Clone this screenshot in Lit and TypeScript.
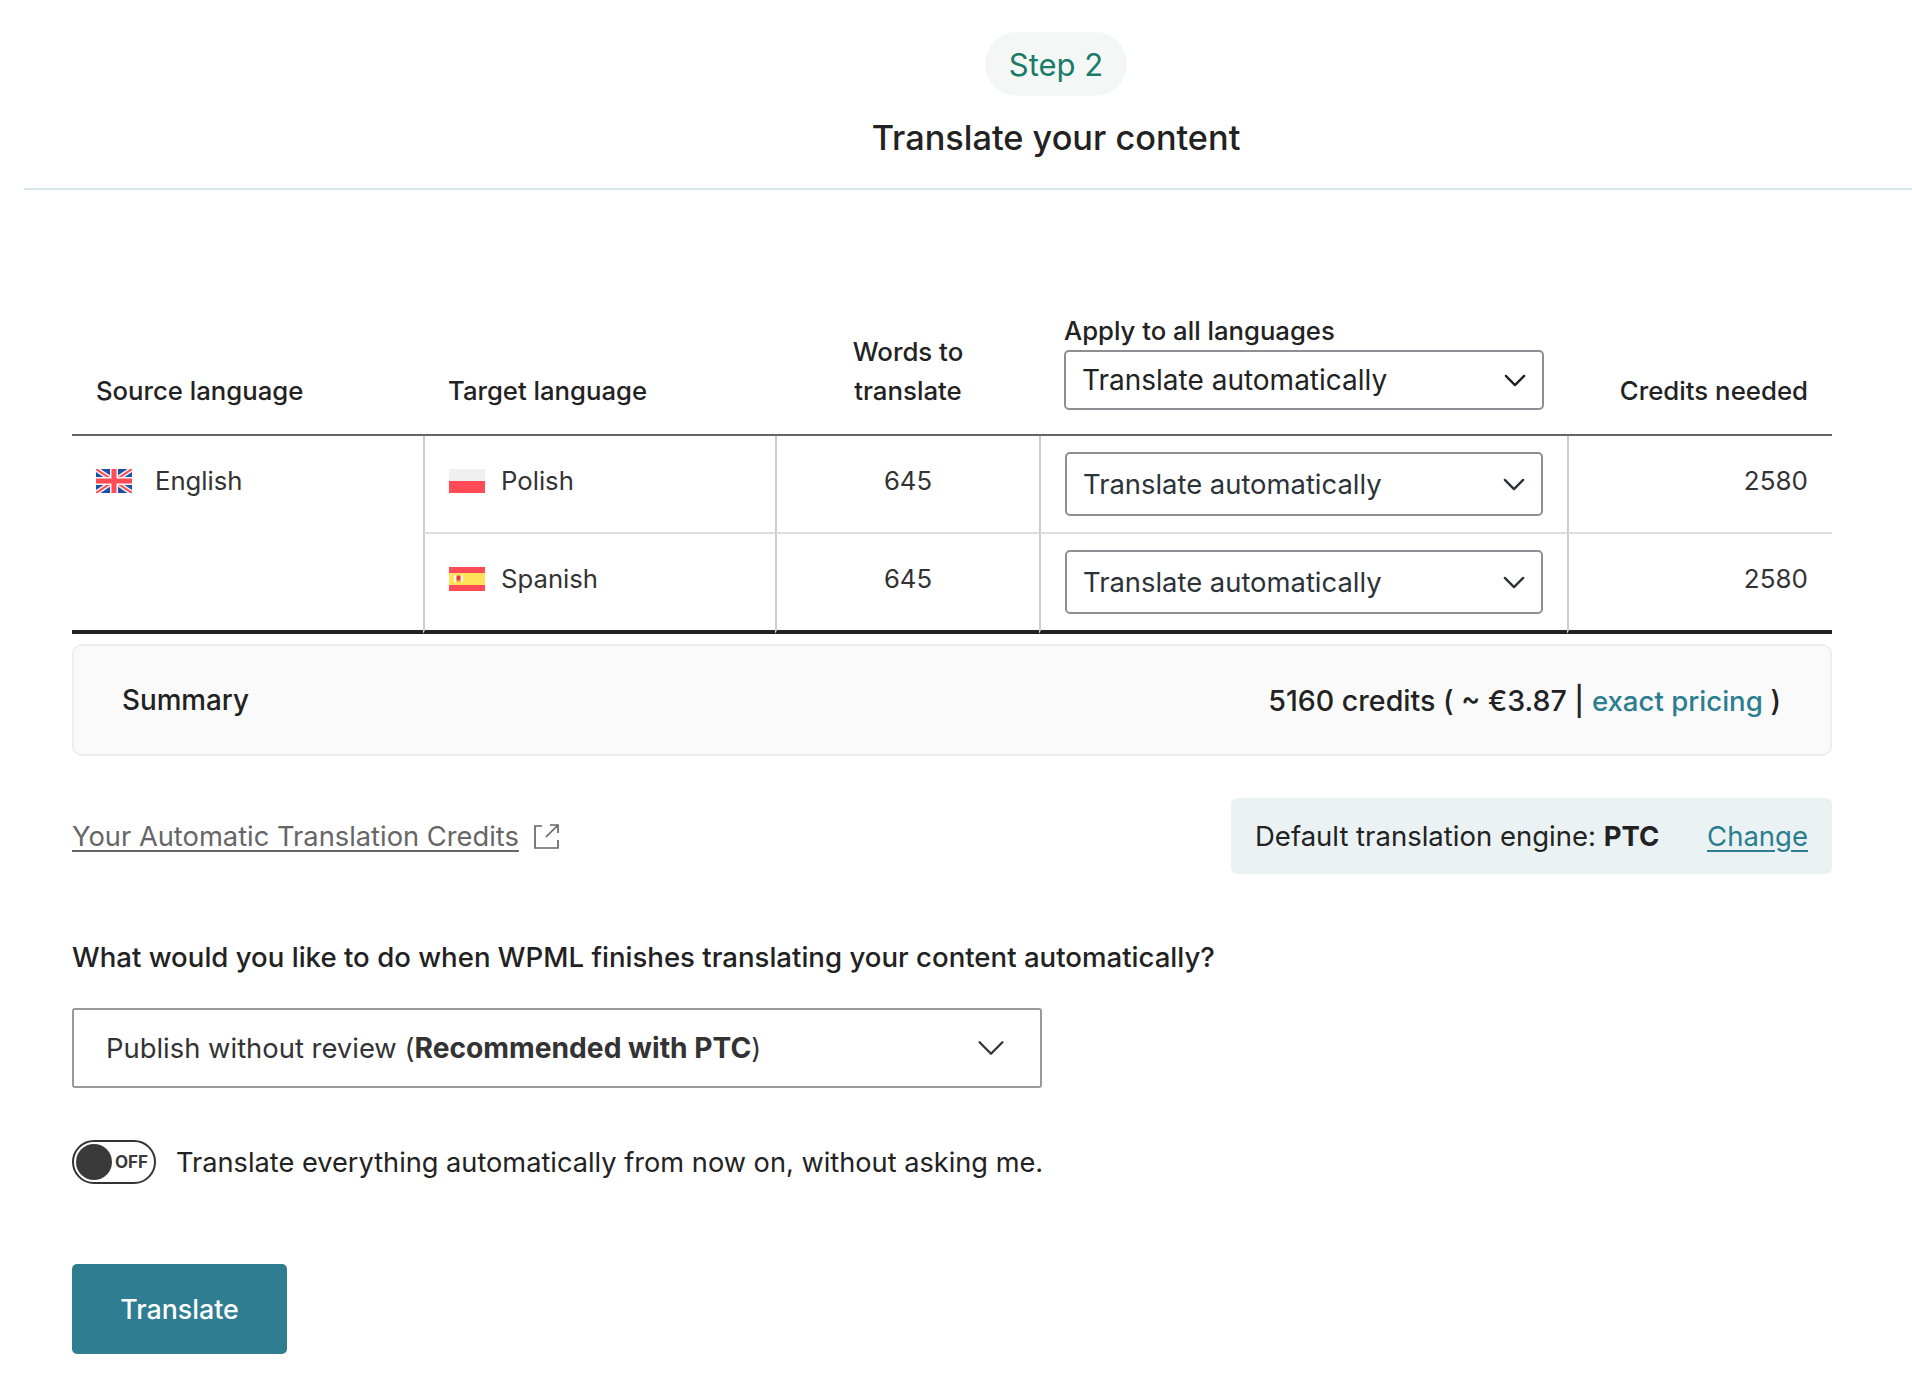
import { LitElement, html, css } from "lit";
import { customElement } from "lit/decorators.js";

const chevron = (cls: string) => html`<svg class=${cls} viewBox="0 0 24 14" fill="none" stroke="currentColor" stroke-linecap="round" stroke-linejoin="round"><path d="M2 2l10 10L22 2" /></svg>`;

const ukFlag = html`<svg class="flag" viewBox="0 0 36 24">
  <rect width="36" height="24" fill="#1e4fa8" />
  <path d="M0 0l36 24M36 0L0 24" stroke="#f5f5f5" stroke-width="5" />
  <path d="M0 0l36 24M36 0L0 24" stroke="#ff4b55" stroke-width="2" />
  <path d="M18 0v24M0 12h36" stroke="#f5f5f5" stroke-width="8" />
  <path d="M18 0v24M0 12h36" stroke="#ff4b55" stroke-width="5" />
</svg>`;

const plFlag = html`<svg class="flag" viewBox="0 0 36 24">
  <rect width="36" height="12" fill="#f0f0f0" />
  <rect y="12" width="36" height="12" fill="#ff4b55" />
</svg>`;

const esFlag = html`<svg class="flag" viewBox="0 0 36 24">
  <rect width="36" height="24" fill="#ff4b55" />
  <rect y="6" width="36" height="12" fill="#ffe15a" />
  <rect x="5" y="8" width="2" height="7" fill="#f5f5f5" />
  <rect x="12" y="8" width="2" height="7" fill="#f5f5f5" />
  <rect x="7" y="8" width="5" height="7" rx="2" fill="#f0a040" />
  <rect x="8" y="9" width="3" height="4" fill="#e63946" />
</svg>`;

@customElement("app-root")
export class AppRoot extends LitElement {
  static styles = css`
    :host {
      display: block;
      background: #fff;
      min-height: 1396px;
      font-family: Inter, "Liberation Sans", sans-serif;
      font-size: 27.5px;
      color: #222;
    }
    .head {
      display: flex;
      flex-direction: column;
      align-items: center;
      padding: 32px 0 30px 200px;
    }
    .pill {
      height: 64px;
      padding: 0 24px;
      display: flex;
      align-items: center;
      border-radius: 32px;
      background: #f4f7f6;
      color: #1a7c68;
      font-size: 31px;
    }
    h1 {
      margin: 22px 0 0;
      font-size: 34.3px;
      line-height: 40px;
      font-weight: 500;
      color: #222;
    }
    .rule {
      height: 2px;
      margin-left: 24px;
      background: #d8e6e9;
    }
    .content {
      padding: 120px 80px 0 72px;
    }
    table {
      width: 1760px;
      table-layout: fixed;
      border-collapse: separate;
      border-spacing: 0;
      font-size: 25.7px;
    }
    th {
      font-weight: 500;
      text-align: left;
      vertical-align: bottom;
      line-height: 39px;
      padding: 0 24px 24px;
      border-bottom: 2px solid #666;
    }
    th.target {
      padding-left: 25px;
    }
    td {
      box-sizing: border-box;
      vertical-align: top;
      padding: 0 24px;
      height: 98px;
      line-height: 40px;
      border-left: 2px solid #ccc;
      border-bottom: 2px solid #ddd;
    }
    tr:last-child td {
      height: 100px;
    }
    tr:last-child td,
    td.source {
      border-bottom: 4px solid #222;
    }
    td.source {
      border-left: none;
    }
    .lang {
      display: flex;
      align-items: center;
      padding-top: 25px;
      color: #333;
    }
    .flag {
      width: 36px;
      height: 24px;
      flex: none;
      margin-right: 16px;
    }
    .source .flag {
      margin-right: 23px;
    }
    .words {
      text-align: center;
      padding-top: 25px;
      color: #333;
    }
    .credits {
      text-align: right;
      padding-top: 25px;
      color: #333;
      font-size: 26px;
    }
    th.credits,
    th.words {
      padding-top: 0;
      color: inherit;
      font-size: 25.8px;
    }
    th.words {
      padding-left: 26px;
    }
    .apply-label {
      display: block;
      margin-left: 1px;
      line-height: 42px;
      margin-bottom: -2px;
    }
    .select {
      display: flex;
      align-items: center;
      justify-content: space-between;
      box-sizing: border-box;
      background: #fff;
      border: 2px solid #8c8f94;
      border-radius: 5px;
      padding: 0 16px;
      font-weight: 400;
      color: #2c3338;
    }
    .select.all {
      height: 60px;
      width: 480px;
      margin-left: 1px;
      color: #222;
      font-size: 28px;
    }
    .select.row {
      height: 64px;
      width: 478px;
      margin-top: 16px;
      font-size: 27.4px;
    }
    .chev {
      width: 22px;
      height: 13px;
      stroke-width: 2.6;
    }
    .summary {
      box-sizing: border-box;
      height: 112px;
      margin-top: 10px;
      padding: 0 49px 0 48px;
      display: flex;
      align-items: center;
      justify-content: space-between;
      background: #fafafa;
      border: 2px solid #eee;
      border-radius: 10px;
      font-size: 27.8px;
      font-weight: 500;
    }
    .summary .total {
      font-size: 28.6px;
    }
    .summary a {
      color: #2b7d90;
      font-size: 27.6px;
      text-decoration: none;
    }
    .links {
      display: flex;
      align-items: center;
      justify-content: space-between;
      margin-top: 42px;
    }
    .credits-link {
      display: flex;
      align-items: center;
      color: #666;
      font-size: 27.3px;
    }
    .credits-link a {
      color: inherit;
      text-decoration: underline;
      text-underline-offset: 4px;
    }
    .ext {
      width: 25px;
      height: 25px;
      margin-left: 15px;
    }
    .engine {
      box-sizing: border-box;
      width: 601px;
      height: 76px;
      padding: 0 24px;
      display: flex;
      align-items: center;
      justify-content: space-between;
      background: #ebf2f4;
      border-radius: 6px;
    }
    .engine a {
      color: #2b7d90;
      text-decoration: underline;
      text-underline-offset: 4px;
    }
    .question {
      margin-top: 63px;
      line-height: 40px;
      font-weight: 500;
      font-size: 27.6px;
    }
    .publish {
      box-sizing: border-box;
      width: 970px;
      height: 80px;
      margin-top: 31px;
      padding: 0 35px 0 32px;
      display: flex;
      align-items: center;
      justify-content: space-between;
      border: 2px solid #999;
      border-radius: 3px;
      color: #333;
      font-size: 27.4px;
    }
    .publish b {
      font-size: 28.2px;
      font-weight: 700;
    }
    .chev-lg {
      width: 28px;
      height: 16px;
      stroke-width: 2;
      color: #333;
    }
    .auto {
      display: flex;
      align-items: center;
      margin-top: 52px;
      font-size: 27.2px;
    }
    .toggle {
      position: relative;
      box-sizing: border-box;
      width: 84px;
      height: 44px;
      flex: none;
      margin-right: 20px;
      border: 2px solid #333;
      border-radius: 22px;
      font-size: 17px;
      font-weight: 700;
      color: #3a3a3a;
      display: flex;
      align-items: center;
      justify-content: flex-end;
      padding-right: 6px;
    }
    .toggle::before {
      content: "";
      position: absolute;
      left: 2px;
      top: 2px;
      width: 36px;
      height: 36px;
      border-radius: 50%;
      background: #3a3a3a;
    }
    .go {
      display: flex;
      align-items: center;
      justify-content: center;
      width: 215px;
      height: 90px;
      margin-top: 80px;
      background: #2e7d90;
      border-radius: 5px;
      color: #fff;
      font-size: 26.8px;
      font-weight: 500;
    }
  `;

  render() {
    return html`
      <div class="head">
        <div class="pill">Step 2</div>
        <h1>Translate your content</h1>
      </div>
      <div class="rule"></div>
      <div class="content">
        <table>
          <colgroup>
            <col style="width:351px" />
            <col style="width:352px" />
            <col style="width:264px" />
            <col style="width:528px" />
            <col style="width:265px" />
          </colgroup>
          <thead>
            <tr>
              <th>Source language</th>
              <th class="target">Target language</th>
              <th class="words">Words to<br />translate</th>
              <th>
                <span class="apply-label">Apply to all languages</span>
                <div class="select all">Translate automatically ${chevron("chev")}</div>
              </th>
              <th class="credits">Credits needed</th>
            </tr>
          </thead>
          <tbody>
            <tr>
              <td class="source" rowspan="2"><div class="lang">${ukFlag}English</div></td>
              <td><div class="lang">${plFlag}Polish</div></td>
              <td class="words">645</td>
              <td><div class="select row">Translate automatically ${chevron("chev")}</div></td>
              <td class="credits">2580</td>
            </tr>
            <tr>
              <td><div class="lang">${esFlag}Spanish</div></td>
              <td class="words">645</td>
              <td><div class="select row">Translate automatically ${chevron("chev")}</div></td>
              <td class="credits">2580</td>
            </tr>
          </tbody>
        </table>

        <div class="summary">
          <span>Summary</span>
          <span class="total">5160 credits ( ~ €3.87 | <a>exact pricing</a> )</span>
        </div>

        <div class="links">
          <div class="credits-link">
            <a>Your Automatic Translation Credits</a>
            <svg class="ext" viewBox="0 0 25 25" fill="none" stroke="currentColor" stroke-width="1.7">
              <path d="M8 2H1v22h23v-8M12 13L24 1M16 1h8v8" />
            </svg>
          </div>
          <div class="engine">
            <span>Default translation engine: <b>PTC</b></span>
            <a>Change</a>
          </div>
        </div>

        <div class="question">What would you like to do when WPML finishes translating your content automatically?</div>
        <div class="publish">
          <span>Publish without review (<b>Recommended with PTC</b>)</span>
          ${chevron("chev-lg")}
        </div>
        <div class="auto">
          <div class="toggle">OFF</div>
          <span>Translate everything automatically from now on, without asking me.</span>
        </div>
        <div class="go">Translate</div>
      </div>
    `;
  }
}
